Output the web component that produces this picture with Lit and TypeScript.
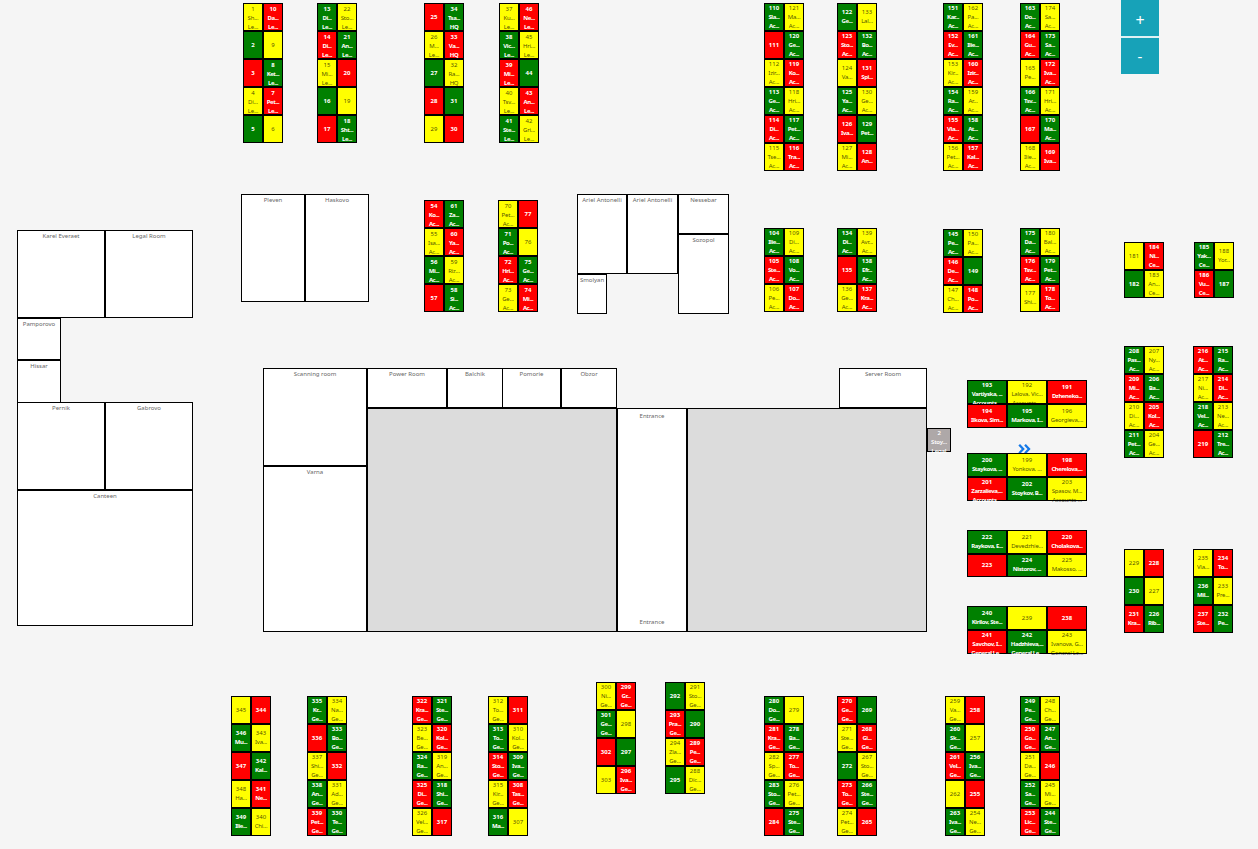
import { LitElement, html, css } from "lit";
import { customElement, property } from "lit/decorators.js";
import { styleMap } from "lit/directives/style-map.js";

interface Cluster {
  x: number;
  y: number;
  /** Rows of desks: "<status><number>|<name>|<department>", separated by ";". */
  desks: string;
  wide?: boolean;
  low?: boolean;
  rowHeight?: number;
}

interface Room {
  x: number;
  y: number;
  w: number;
  h: number;
  labels: string[];
  hall?: boolean;
}

const room = (x: number, y: number, w: number, h: number, ...labels: string[]): Room => ({ x, y, w, h, labels });
const hall = (x: number, y: number, w: number, h: number): Room => ({ x, y, w, h, labels: [], hall: true });

const ROOMS: Room[] = [
  room(17, 230, 88, 88, "Karel Everaet"),
  room(105, 230, 88, 88, "Legal Room"),
  room(17, 318, 44, 42, "Pamporovo"),
  room(17, 360, 44, 43, "Hissar"),
  room(17, 402, 88, 88, "Pernik"),
  room(105, 402, 88, 88, "Gabrovo"),
  room(17, 490, 176, 136, "Canteen"),
  room(241, 194, 64, 108, "Pleven"),
  room(305, 194, 64, 108, "Haskovo"),
  room(577, 194, 50, 80, "Ariel Antonelli"),
  room(627, 194, 51, 80, "Ariel Antonelli"),
  room(678, 194, 51, 40, "Nessebar"),
  room(678, 234, 51, 80, "Sozopol"),
  room(577, 274, 30, 40, "Smolyan"),
  room(263, 368, 104, 98, "Scanning room"),
  room(263, 466, 104, 166, "Varna"),
  room(367, 368, 80, 40, "Power Room"),
  room(447, 368, 56, 40, "Balchik"),
  room(502, 368, 59, 40, "Pomorie"),
  room(561, 368, 56, 40, "Obzor"),
  room(839, 368, 88, 40, "Server Room"),
  hall(367, 408, 250, 224),
  room(617, 408, 70, 224, "Entrance", "Entrance"),
  hall(687, 408, 240, 224),
];

const CLUSTERS: Cluster[] = [
  { x: 243, y: 3, low: true, desks: "y1|Sh...|Le...;r10|Da...|Le...;g2;y9;r3;g8|Ket...|Le...;y4|Di...|Le...;r7|Pet...|Le...;g5;y6" },
  { x: 317, y: 3, low: true, desks: "g13|Di...|Le...;y22|Sto...|Le...;r14|Di...|Le...;g21|An...|Le...;y15|Mi...|Le...;r20;g16;y19;r17;g18|Sht...|Le..." },
  { x: 424, y: 3, low: true, desks: "r25;g34|Tsa...|HQ;y26|M...|Le...;r33|Va...|HQ;g27;y32|Ra...|HQ;r28;g31;y29;r30" },
  { x: 499, y: 3, low: true, desks: "y37|Ku...|Le...;r46|Ne...|Le...;g38|Vic...|Le...;y45|Hri...|Le...;r39|Mi...|Le...;g44;y40|Tsv...|Le...;r43|An...|Le...;g41|Ste...|Le...;y42|Gri...|Le..." },
  { x: 764, y: 3, desks: "g110|Sla...|Ac...;y121|Ma...|Ac...;r111;g120|Ge...|Ac...;y112|Izir...|Ac...;r119|Ko...|Ac...;g113|Ge...|Ac...;y118|Hri...|Ac...;r114|Di...|Ac...;g117|Pet...|Ac...;y115|Tse...|Ac...;r116|Tra...|Ac..." },
  { x: 837, y: 3, desks: "g122|Ge...;y133|Lal...;r123|Sto...|Ac...;g132|Bo...|Ac...;y124|Va...;r131|Spi...;g125|Ya...|Ac...;y130|Ge...|Ac...;r126|Iva...;g129|Pet...;y127|Mi...|Ac...;r128|An..." },
  { x: 943, y: 3, desks: "g151|Kar...|Ac...;y162|Pa...|Ac...;r152|Ev...|Ac...;g161|Ilie...|Ac...;y153|Kir...|Ac...;r160|Izir...|Ac...;g154|Ra...|Ac...;y159|Ar...|Ac...;r155|Vla...|Ac...;g158|At...|Ac...;y156|Pet...|Ac...;r157|Kal...|Ac..." },
  { x: 1020, y: 3, desks: "g163|Do...|Ac...;y174|Sa...|Ac...;r164|Gu...|Ac...;g173|Sa...|Ac...;y165|Pe...;r172|Iva...|Ac...;g166|Tsv...|Ac...;y171|Hri...|Ac...;r167;g170|Ma...|Ac...;y168|Ilie...|Ac...;r169|Iva..." },
  { x: 424, y: 200, low: true, desks: "r54|Ko...|Ac...;g61|Za...|Ac...;y55|Isa...|Ac...;r60|Ya...|Ac...;g56|Mi...|Ac...;y59|Riz...|Ac...;r57;g58|Si...|Ac..." },
  { x: 498, y: 200, low: true, desks: "y70|Pet...|Ac...;r77;g71|Po...|Ac...;y76;r72|Hri...|Ac...;g75|Ge...|Ac...;y73|Ge...|Ac...;r74|Mi...|Ac..." },
  { x: 764, y: 228, desks: "g104|Ilie...|Ac...;y109|Di...|Ac...;r105|Ste...|Ac...;g108|Vo...|Ac...;y106|Pe...|Ac...;r107|Do...|Ac..." },
  { x: 837, y: 228, desks: "g134|Di...|Ac...;y139|Avr...|Ac...;r135;g138|Efr...|Ac...;y136|Ge...|Ac...;r137|Kra...|Ac..." },
  { x: 943, y: 229, desks: "g145|Pe...|Ac...;y150|Pa...|Ac...;r146|De...|Ac...;g149;y147|Ch...|Ac...;r148|Po...|Ac..." },
  { x: 1020, y: 228, desks: "g175|Da...|Ac...;y180|Bal...|Ac...;r176|Tsv...|Ac...;g179|Pet...|Ac...;y177|Shi...;r178|To...|Ac..." },
  { x: 1124, y: 242, desks: "y181;r184|Ni...|Ce...;g182;y183|An...|Ce..." },
  { x: 1194, y: 242, desks: "g185|Yak...|Ce...;y188|Yor...;r186|Vu...|Ce...;g187" },
  { x: 1124, y: 346, desks: "g208|Pas...|Ac...;y207|Ny...|Ac...;r209|Mi...|Ac...;g206|Ba...|Ac...;y210|Di...|Ac...;r205|Kol...|Ac...;g211|Pet...|Ac...;y204|Ge...|Ac..." },
  { x: 1193, y: 346, desks: "r216|At...|Ac...;g215|Ra...|Ac...;y217|Ni...|Ac...;r214|Di...|Ac...;g218|Vel...|Ac...;y213|Ne...|Ac...;r219;g212|Tre...|Ac..." },
  { x: 1124, y: 549, desks: "y229;r228;g230;y227;r231|Kra...;g226|Rib..." },
  { x: 1193, y: 549, desks: "y235|Vla...;r234|To...;g236|Mil...;y233|Pre...;r237|Ste...;g232|Pe..." },
  { x: 967, y: 380, wide: true, rowHeight: 24, desks: "g193|Vartiyska, ...|Accounts ...;y192|Lalova, Vic...|Accounts ...;r191|Dzheneko...;r194|Ilkova, Sim...;g195|Markova, I...;y196|Georgieva,..." },
  { x: 967, y: 453, wide: true, rowHeight: 24, desks: "g200|Staykova, ...;y199|Yonkova, ...;r198|Cherelova,...;r201|Zarzalieva,...|Accounts ...;g202|Stoykov, B...;y203|Spasov, M...|Accounts ..." },
  { x: 967, y: 530, wide: true, rowHeight: 23.5, desks: "g222|Raykova, E...;y221|Devedzhie...;r220|Cholakova...;r223;g224|Nistorov, ...;y225|Makosso, ..." },
  { x: 967, y: 606, wide: true, rowHeight: 24, desks: "g240|Kirilov, Ste...;y239;r238;r241|Savchov, I...|General Le...;g242|Hadzhieva,...|General Le...;y243|Ivanova, G...|General Le..." },
  { x: 231, y: 696, desks: "y345;r344;g346|Mu...;y343|Iva...;r347;g342|Kal...;y348|Ha...;r341|Ne...;g349|Ilie...;y340|Chi..." },
  { x: 307, y: 696, desks: "g335|Kr...|Ge...;y334|Na...|Ge...;r336;g333|Bo...|Ge...;y337|Shi...|Ge...;r332;g338|An...|Ge...;y331|Ad...|Ge...;r339|Pet...|Ge...;g330|Te...|Ge..." },
  { x: 412, y: 696, desks: "r322|Kra...|Ge...;g321|Ste...|Ge...;y323|Be...|Ge...;r320|Kol...|Ge...;g324|Ra...|Ge...;y319|An...|Ge...;r325|Di...|Ge...;g318|Shi...|Ge...;y326|Vel...|Ge...;r317" },
  { x: 488, y: 696, desks: "y312|To...|Ge...;r311;g313|To...|Ge...;y310|Kol...|Ge...;r314|Sto...|Ge...;g309|Iva...|Ge...;y315|Kir...|Ge...;r308|Tas...|Ge...;g316|Ma...;y307" },
  { x: 596, y: 682, desks: "y300|Ni...|Ge...;r299|Gr...|Ge...;g301|Ge...|Ge...;y298;r302;g297;y303;r296|Iva...|Ge..." },
  { x: 665, y: 682, desks: "g292;y291|Sto...|Ge...;r293|Pra...|Ge...;g290;y294|Zla...|Ge...;r289|Pe...|Ge...;g295;y288|Dic...|Ge..." },
  { x: 764, y: 696, desks: "g280|Do...|Ge...;y279;r281|Kra...|Ge...;g278|Ba...|Ge...;y282|Sp...|Ge...;r277|To...|Ge...;g283|Sto...|Ge...;y276|Pet...|Ge...;r284;g275|Ste...|Ge..." },
  { x: 837, y: 696, desks: "r270|Ge...|Ge...;g269;y271|Ste...|Ge...;r268|Gi...|Ge...;g272;y267|Sto...|Ge...;r273|To...|Ge...;g266|Ste...|Ge...;y274|Pet...|Ge...;r265" },
  { x: 945, y: 696, desks: "y259|Va...|Ge...;r258;g260|Sk...|Ge...;y257;r261|Vel...|Ge...;g256|Iva...|Ge...;y262;r255;g263|Iva...|Ge...;y254|Ne...|Ge..." },
  { x: 1020, y: 696, desks: "g249|Pe...|Ge...;y248|Ch...|Ge...;r250|Go...|Ge...;g247|An...|Ge...;y251|Da...|Ge...;r246;g252|Sa...|Ge...;y245|Mi...|Ge...;r253|Lic...|Ge...;g244|Ste...|Ge..." },
];

const STATUS: Record<string, string> = { g: "free", r: "taken", y: "pending" };

@customElement("desk-cluster")
class DeskCluster extends LitElement {
  @property() desks = "";
  @property({ type: Boolean }) wide = false;
  @property({ type: Boolean }) low = false;
  @property({ type: Number }) rowHeight = 28;

  static styles = css`
    :host {
      display: block;
    }
    .grid {
      display: grid;
      grid-template-columns: 20px 20px;
    }
    .grid.wide {
      grid-template-columns: 40px 40px 40px;
    }
    .desk {
      box-sizing: border-box;
      border: 1px solid #000;
      display: flex;
      flex-direction: column;
      justify-content: safe center;
      text-align: center;
      white-space: nowrap;
      font-size: 6px;
      line-height: 9px;
      min-width: 0;
    }
    .low .desk {
      padding-top: 1px;
    }
    .line {
      flex: none;
      display: flex;
      justify-content: center;
      height: 9px;
    }
    .line + .line {
      letter-spacing: -0.2px;
    }
    .free,
    .taken {
      color: #fff;
      font-weight: 700;
    }
    .free .line + .line,
    .taken .line + .line {
      letter-spacing: -0.42px;
    }
    .free {
      background: #008000;
    }
    .taken {
      background: #ff0000;
    }
    .pending {
      background: #ffff00;
      color: rgba(0, 0, 0, 0.72);
    }
  `;

  render() {
    return html`<div
      class="grid ${this.wide ? "wide" : ""} ${this.low ? "low" : ""}"
      style=${styleMap({ gridAutoRows: `${this.rowHeight}px` })}
    >
      ${this.desks.split(";").map(
        (d) => html`<div class="desk ${STATUS[d[0]]}">
          ${d.slice(1).split("|").map((t) => html`<span class="line">${t}</span>`)}
        </div>`
      )}
    </div>`;
  }
}

@customElement("app-root")
class AppRoot extends LitElement {
  static styles = css`
    :host {
      display: block;
      font-family: "Noto Sans", "Open Sans", sans-serif;
    }
    .map {
      position: relative;
      height: 849px;
      background: #f5f5f5;
      overflow: hidden;
    }
    .room {
      position: absolute;
      box-sizing: border-box;
      border: 1px solid #000;
      background: #fff;
      padding: 1px 0 4px;
      display: flex;
      flex-direction: column;
      align-items: center;
      justify-content: space-between;
      font-size: 6px;
      line-height: 9px;
      color: #666;
      white-space: nowrap;
    }
    .room.double {
      padding-top: 3px;
    }
    .room.hall {
      background: #dcdcdc;
    }
    .cluster {
      position: absolute;
    }
    .seat {
      position: absolute;
      left: 927px;
      top: 428px;
      width: 24px;
      height: 24px;
      box-sizing: border-box;
      border: 1px solid #000;
      background: #aea8a8;
      color: #fff;
      font-size: 6px;
      line-height: 9px;
      font-weight: 600;
      letter-spacing: -0.2px;
      text-align: center;
    }
    .seat span {
      display: block;
    }
    .marker {
      position: absolute;
      left: 1018px;
      top: 444px;
      width: 13px;
      height: 10px;
    }
    .zoom {
      position: absolute;
      left: 1121px;
      top: 0;
      display: flex;
      flex-direction: column;
      gap: 2px;
      width: 38px;
      background: #dff1f4;
    }
    .zoom button {
      all: unset;
      height: 36px;
      background: #17a2b8;
      color: #fff;
      text-align: center;
      font-size: 16px;
      line-height: 40px;
    }
    .zoom .out {
      font-size: 15px;
      line-height: 37px;
    }
  `;

  render() {
    return html`<main class="map">
      ${ROOMS.map(
        (r) => html`<section
          class="room ${r.hall ? "hall" : ""} ${r.labels.length > 1 ? "double" : ""}"
          style=${styleMap({ left: `${r.x}px`, top: `${r.y}px`, width: `${r.w}px`, height: `${r.h}px` })}
        >
          ${r.labels.map((l) => html`<span>${l}</span>`)}
        </section>`
      )}
      <svg class="marker" viewBox="0 0 13 10" fill="none" stroke="#1479e8" stroke-width="2.3">
        <path d="M1.2 .8L5.2 5L1.2 9.2M7 .8L11 5L7 9.2" />
      </svg>
      ${CLUSTERS.map(
        (c) => html`<desk-cluster
          class="cluster"
          style=${styleMap({ left: `${c.x}px`, top: `${c.y}px` })}
          .desks=${c.desks}
          .wide=${c.wide ?? false}
          .low=${c.low ?? false}
          .rowHeight=${c.rowHeight ?? 28}
        ></desk-cluster>`
      )}
      <div class="seat"><span>2</span><span>Stoy...</span><span>Legal</span></div>
      <div class="zoom"><button>+</button><button class="out">-</button></div>
    </main>`;
  }
}
